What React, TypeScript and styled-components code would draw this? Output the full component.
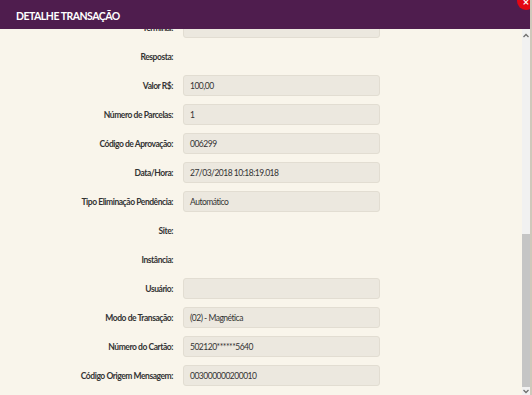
import React, { useLayoutEffect, useRef } from "react";
import styled, { createGlobalStyle } from "styled-components";

const GlobalStyle = createGlobalStyle`
  html, body { margin: 0; padding: 0; background: #f9f5eb; }
  body { font-family: Lato, "Open Sans", Arial, sans-serif; }
`;

const Modal = styled.div`
  position: relative;
  width: 532px;
  height: 395px;
  display: flex;
  flex-direction: column;
  box-sizing: border-box;
  border-right: 2px solid #cfc8bb;
  overflow: hidden;
  background: #f9f5eb;
`;

const Header = styled.div`
  flex: 0 0 29px;
  box-sizing: border-box;
  display: flex;
  align-items: center;
  padding: 3px 0 0 16px;
  background: #4f1d4e;
  color: #ffffff;
  font-size: 10.5px;
  font-weight: 700;
  letter-spacing: -0.5px;
  text-transform: uppercase;
`;

const CloseButton = styled.div`
  position: absolute;
  top: -8px;
  right: -5px;
  width: 18px;
  height: 18px;
  border-radius: 50%;
  background: #e30613;
  color: #fff;
  font-size: 11px;
  font-weight: 700;
  display: flex;
  align-items: center;
  justify-content: center;
`;

const Body = styled.div`
  flex: 1;
  display: flex;
  min-height: 0;
`;

const Content = styled.div`
  flex: 1;
  overflow: hidden;
  min-height: 0;
`;

const Form = styled.div`
  padding: 0 0 10px 0;
`;

const Row = styled.div`
  display: grid;
  grid-template-columns: 173px 197px;
  column-gap: 10px;
  align-items: center;
  height: 29px;
`;

const Label = styled.div`
  text-align: right;
  font-size: 8.5px;
  font-weight: 700;
  letter-spacing: -0.45px;
  color: #333333;
  white-space: nowrap;
`;

const Field = styled.div`
  height: 21px;
  box-sizing: border-box;
  border: 1px solid #e2ddd2;
  border-radius: 3px;
  background: #ece8df;
  padding-left: 6px;
  display: flex;
  align-items: center;
  font-size: 8.5px;
  letter-spacing: -0.5px;
  color: #333333;
  white-space: nowrap;
`;

const ScrollBar = styled.div`
  flex: 0 0 8px;
  display: flex;
  flex-direction: column;
  background: #f1f1f1;
`;

const ArrowBox = styled.div<{ $h: number }>`
  flex: 0 0 ${(p) => p.$h}px;
  display: flex;
  align-items: center;
  justify-content: center;
`;

const Track = styled.div`
  flex: 1;
  display: flex;
  flex-direction: column;
`;

const TrackSpace = styled.div<{ $h: number }>`
  flex: 0 0 ${(p) => p.$h}px;
`;

const Thumb = styled.div`
  flex: 1;
  background: #c5c5c5;
`;

const Chevron = ({ up }: { up?: boolean }) => (
  <svg width="6" height="5" viewBox="0 0 6 5">
    <path
      d={up ? "M0.5 4 L3 1.5 L5.5 4" : "M0.5 1 L3 3.5 L5.5 1"}
      fill="none"
      stroke="#6f6f6f"
      strokeWidth="1.3"
    />
  </svg>
);

type Item = { label: string; value?: string };

const items: Item[] = [
  { label: "Terminal:", value: "" },
  { label: "Resposta:" },
  { label: "Valor R$:", value: "100,00" },
  { label: "Número de Parcelas:", value: "1" },
  { label: "Código de Aprovação:", value: "006299" },
  { label: "Data/Hora:", value: "27/03/2018 10:18:19.018" },
  { label: "Tipo Eliminação Pendência:", value: "Automático" },
  { label: "Site:" },
  { label: "Instância:" },
  { label: "Usuário:", value: "" },
  { label: "Modo de Transação:", value: "(02) - Magnética" },
  { label: "Número do Cartão:", value: "502120******5640" },
  { label: "Código Origem Mensagem:", value: "003000000200010" },
];

export default function App() {
  const ref = useRef<HTMLDivElement>(null);
  useLayoutEffect(() => {
    if (ref.current) ref.current.scrollTop = 16;
  }, []);
  return (
    <>
      <GlobalStyle />
      <Modal>
        <Header>Detalhe Transação</Header>
        <CloseButton>×</CloseButton>
        <Body>
          <Content ref={ref}>
            <Form>
              {items.map((it) => (
                <Row key={it.label}>
                  <Label>{it.label}</Label>
                  {it.value !== undefined ? <Field>{it.value}</Field> : <span />}
                </Row>
              ))}
            </Form>
          </Content>
          <ScrollBar>
            <ArrowBox $h={12}>
              <Chevron up />
            </ArrowBox>
            <Track>
              <TrackSpace $h={193} />
              <Thumb />
            </Track>
            <ArrowBox $h={8}>
              <Chevron />
            </ArrowBox>
          </ScrollBar>
        </Body>
      </Modal>
    </>
  );
}
